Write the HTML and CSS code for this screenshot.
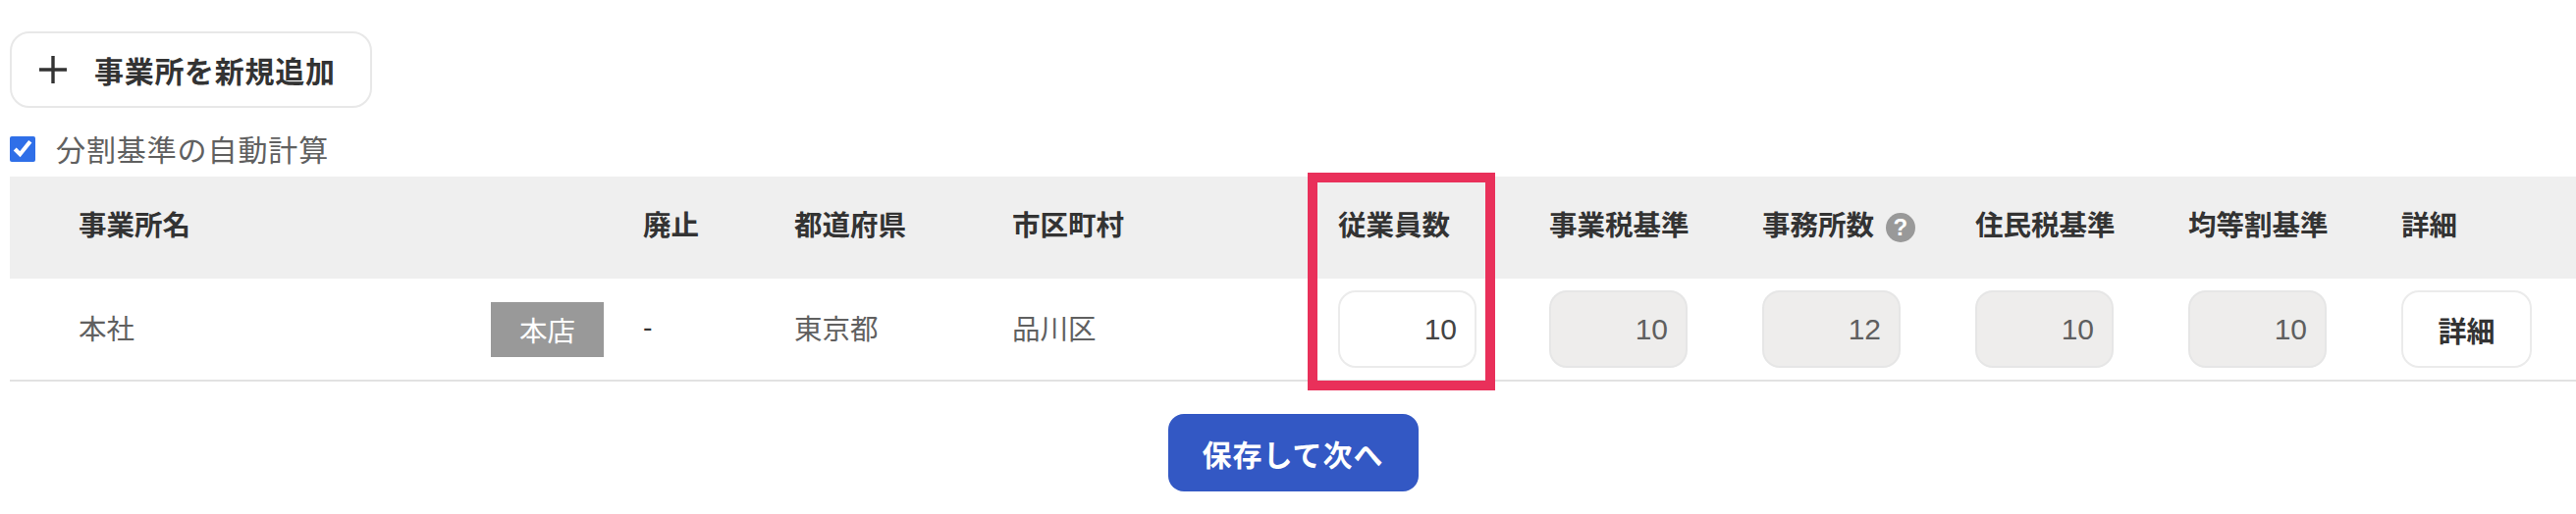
FILE: index.html
```html
<!DOCTYPE html>
<html lang="ja">
<head>
  <meta charset="UTF-8">
  <meta name="viewport" content="width=device-width, initial-scale=1.0">
  <title>事業所</title>
  <link rel="stylesheet" href="styles.css">
</head>
<body>
  <div class="page">
    <button type="button" class="add-button">
      <svg class="plus-icon" width="28" height="28" viewBox="0 0 28 28"><path d="M14 0V28M0 14H28" stroke="#333" stroke-width="3.4" fill="none"/></svg>
      <span>事業所を新規追加</span>
    </button>

    <label class="auto-calc">
      <input type="checkbox" checked>
      <span>分割基準の自動計算</span>
    </label>

    <div class="table-wrap">
      <table class="office-table">
        <colgroup>
          <col class="col-name">
          <col class="col-closed">
          <col class="col-pref">
          <col class="col-city">
          <col class="col-staff">
          <col class="col-num">
          <col class="col-num">
          <col class="col-num">
          <col class="col-num">
          <col class="col-detail">
        </colgroup>
        <thead>
          <tr>
            <th class="first-cell">事業所名</th>
            <th>廃止</th>
            <th>都道府県</th>
            <th>市区町村</th>
            <th>従業員数</th>
            <th>事業税基準</th>
            <th>事務所数 <span class="help-icon">?</span></th>
            <th>住民税基準</th>
            <th>均等割基準</th>
            <th>詳細</th>
          </tr>
        </thead>
        <tbody>
          <tr>
            <td class="first-cell">
              <div class="name-cell">
                <span class="text-up">本社</span>
                <span class="badge">本店</span>
              </div>
            </td>
            <td class="dash text-cell">-</td>
            <td class="text-cell">東京都</td>
            <td class="text-cell">品川区</td>
            <td><input type="text" class="num-input" value="10"></td>
            <td><input type="text" class="num-input" value="10" disabled></td>
            <td><input type="text" class="num-input" value="12" disabled></td>
            <td><input type="text" class="num-input" value="10" disabled></td>
            <td><input type="text" class="num-input" value="10" disabled></td>
            <td><button type="button" class="detail-button">詳細</button></td>
          </tr>
        </tbody>
      </table>
      <div class="highlight"></div>
    </div>

    <div class="actions">
      <button type="button" class="save-button">保存して次へ</button>
    </div>
  </div>
</body>
</html>
```

FILE: styles.css
```css
* {
  box-sizing: border-box;
}

body {
  margin: 0;
  background-color: #fff;
  font-family: "Liberation Sans", "Noto Sans CJK JP", sans-serif;
  font-size: 28.5px;
  color: #606060;
}

button,
input {
  font-family: inherit;
}

.page {
  padding: 32px 0 0 10px;
}

.add-button {
  display: flex;
  align-items: center;
  gap: 28px;
  width: 369px;
  height: 78px;
  padding: 0 0 0 28px;
  background-color: #fff;
  border: 2px solid #e8e8e8;
  border-radius: 20px;
  font-size: 30px;
  font-weight: bold;
  letter-spacing: 0.7px;
  color: #333;
}

.plus-icon {
  flex: none;
}

.auto-calc {
  display: flex;
  align-items: center;
  gap: 21px;
  height: 40px;
  margin-top: 21px;
  font-size: 30px;
  letter-spacing: 0.9px;
}

.auto-calc input {
  width: 26px;
  height: 26px;
  margin: 1px 0 0;
  accent-color: #2f6fe8;
}

.table-wrap {
  position: relative;
  margin-top: 9px;
}

.office-table {
  width: 2614px;
  table-layout: fixed;
  border-collapse: collapse;
}

.col-name { width: 645px; }
.col-closed { width: 154px; }
.col-pref { width: 222px; }
.col-city { width: 332px; }
.col-staff { width: 215px; }
.col-num { width: 217px; }
.col-detail { width: 178px; }

.office-table th {
  height: 104px;
  padding: 30px 0 0;
  background-color: #efefef;
  font-weight: bold;
  line-height: 40px;
  text-align: left;
  vertical-align: top;
  color: #333;
  white-space: nowrap;
}

.office-table td {
  height: 104px;
  padding: 0;
  border-bottom: 2px solid #e2e2e2;
  vertical-align: middle;
}

.office-table .first-cell {
  padding-left: 70px;
}

.office-table .text-cell {
  padding-bottom: 4px;
}

.office-table .dash {
  color: #333;
}

.name-cell {
  display: flex;
  align-items: center;
  justify-content: space-between;
  padding-right: 40px;
}

.text-up {
  padding-bottom: 4px;
}

.badge {
  display: flex;
  align-items: center;
  justify-content: center;
  width: 115px;
  height: 56px;
  background-color: #999;
  color: #fff;
}

.help-icon {
  display: inline-block;
  width: 30px;
  height: 30px;
  margin-left: 4px;
  border-radius: 50%;
  background-color: #999;
  color: #fff;
  font-size: 24px;
  font-weight: bold;
  line-height: 30px;
  text-align: center;
}

.num-input {
  display: block;
  width: 141px;
  height: 79px;
  padding: 0 18px 0 0;
  background-color: #fff;
  border: 2px solid #ebebeb;
  border-radius: 18px;
  font-size: 30px;
  text-align: right;
  color: #444;
}

.num-input:disabled {
  background-color: #eeedec;
  border-color: #e6e6e6;
  color: #5f5f5f;
  opacity: 1;
}

.detail-button {
  width: 133px;
  height: 79px;
  padding: 0;
  background-color: #fff;
  border: 2px solid #ebebeb;
  border-radius: 18px;
  font-size: 29px;
  font-weight: bold;
  color: #333;
}

.highlight {
  position: absolute;
  left: 1322px;
  top: -4px;
  width: 191px;
  height: 222px;
  border: 10px solid #e9305a;
}

.actions {
  display: flex;
  justify-content: center;
  margin-top: 33px;
}

.save-button {
  width: 255px;
  height: 79px;
  padding: 0;
  background-color: #3358c4;
  border: none;
  border-radius: 16px;
  font-size: 30px;
  font-weight: bold;
  letter-spacing: 1px;
  color: #fff;
}
```
